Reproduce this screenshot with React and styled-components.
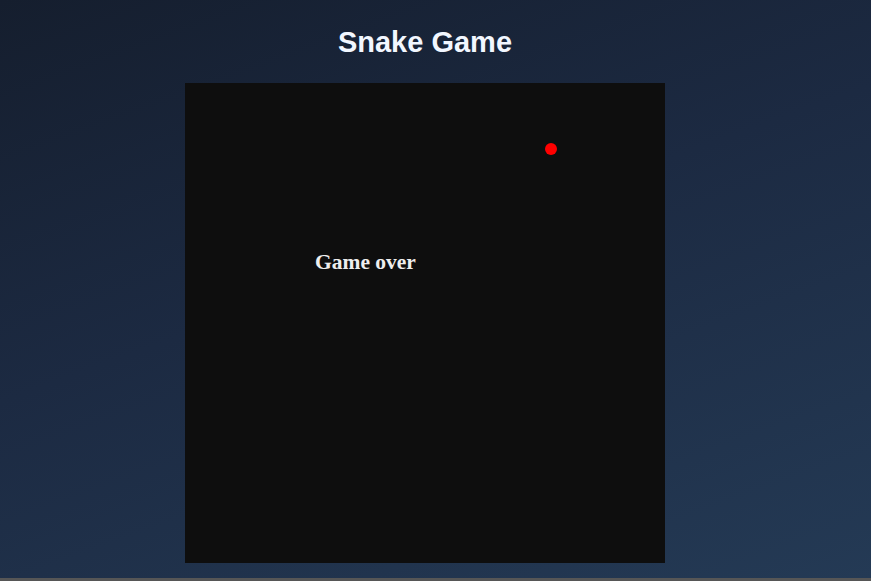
import React from 'react';
import styled, { createGlobalStyle } from 'styled-components';

const GlobalStyle = createGlobalStyle`
  html, body {
    margin: 0;
    padding: 0;
    background: #565656;
    overflow: hidden;
  }
`;

const Page = styled.div`
  height: 578px;
  width: 100%;
  display: flex;
  flex-direction: column;
  padding-top: 26px;
  box-sizing: border-box;
  background: linear-gradient(160deg, #151e2e 0%, #1c2a42 45%, #243a55 100%);
  font-family: "Liberation Sans", Arial, sans-serif;
`;

const Inner = styled.div`
  width: 850px;
  display: flex;
  flex-direction: column;
  align-items: center;
`;

const Title = styled.h1`
  margin: 0 0 24px;
  font-size: 29px;
  line-height: 33px;
  font-weight: 700;
  color: #f2f7ff;
`;

const Board = styled.svg`
  display: block;
  width: 480px;
  height: 480px;
  background: #0e0e0e;
`;

const food = { x: 366, y: 66 };

export default function App() {
  return (
    <>
      <GlobalStyle />
      <Page>
        <Inner>
          <Title>Snake Game</Title>
          <Board viewBox="0 0 480 480">
            <circle cx={food.x} cy={food.y} r="6" fill="#ff0000" />
            <text
              x="130"
              y="186"
              fill="#eeeeee"
              fontFamily='"Liberation Serif", "Times New Roman", serif'
              fontWeight="700"
              fontSize="21.5"
            >
              Game over
            </text>
          </Board>
        </Inner>
      </Page>
    </>
  );
}
